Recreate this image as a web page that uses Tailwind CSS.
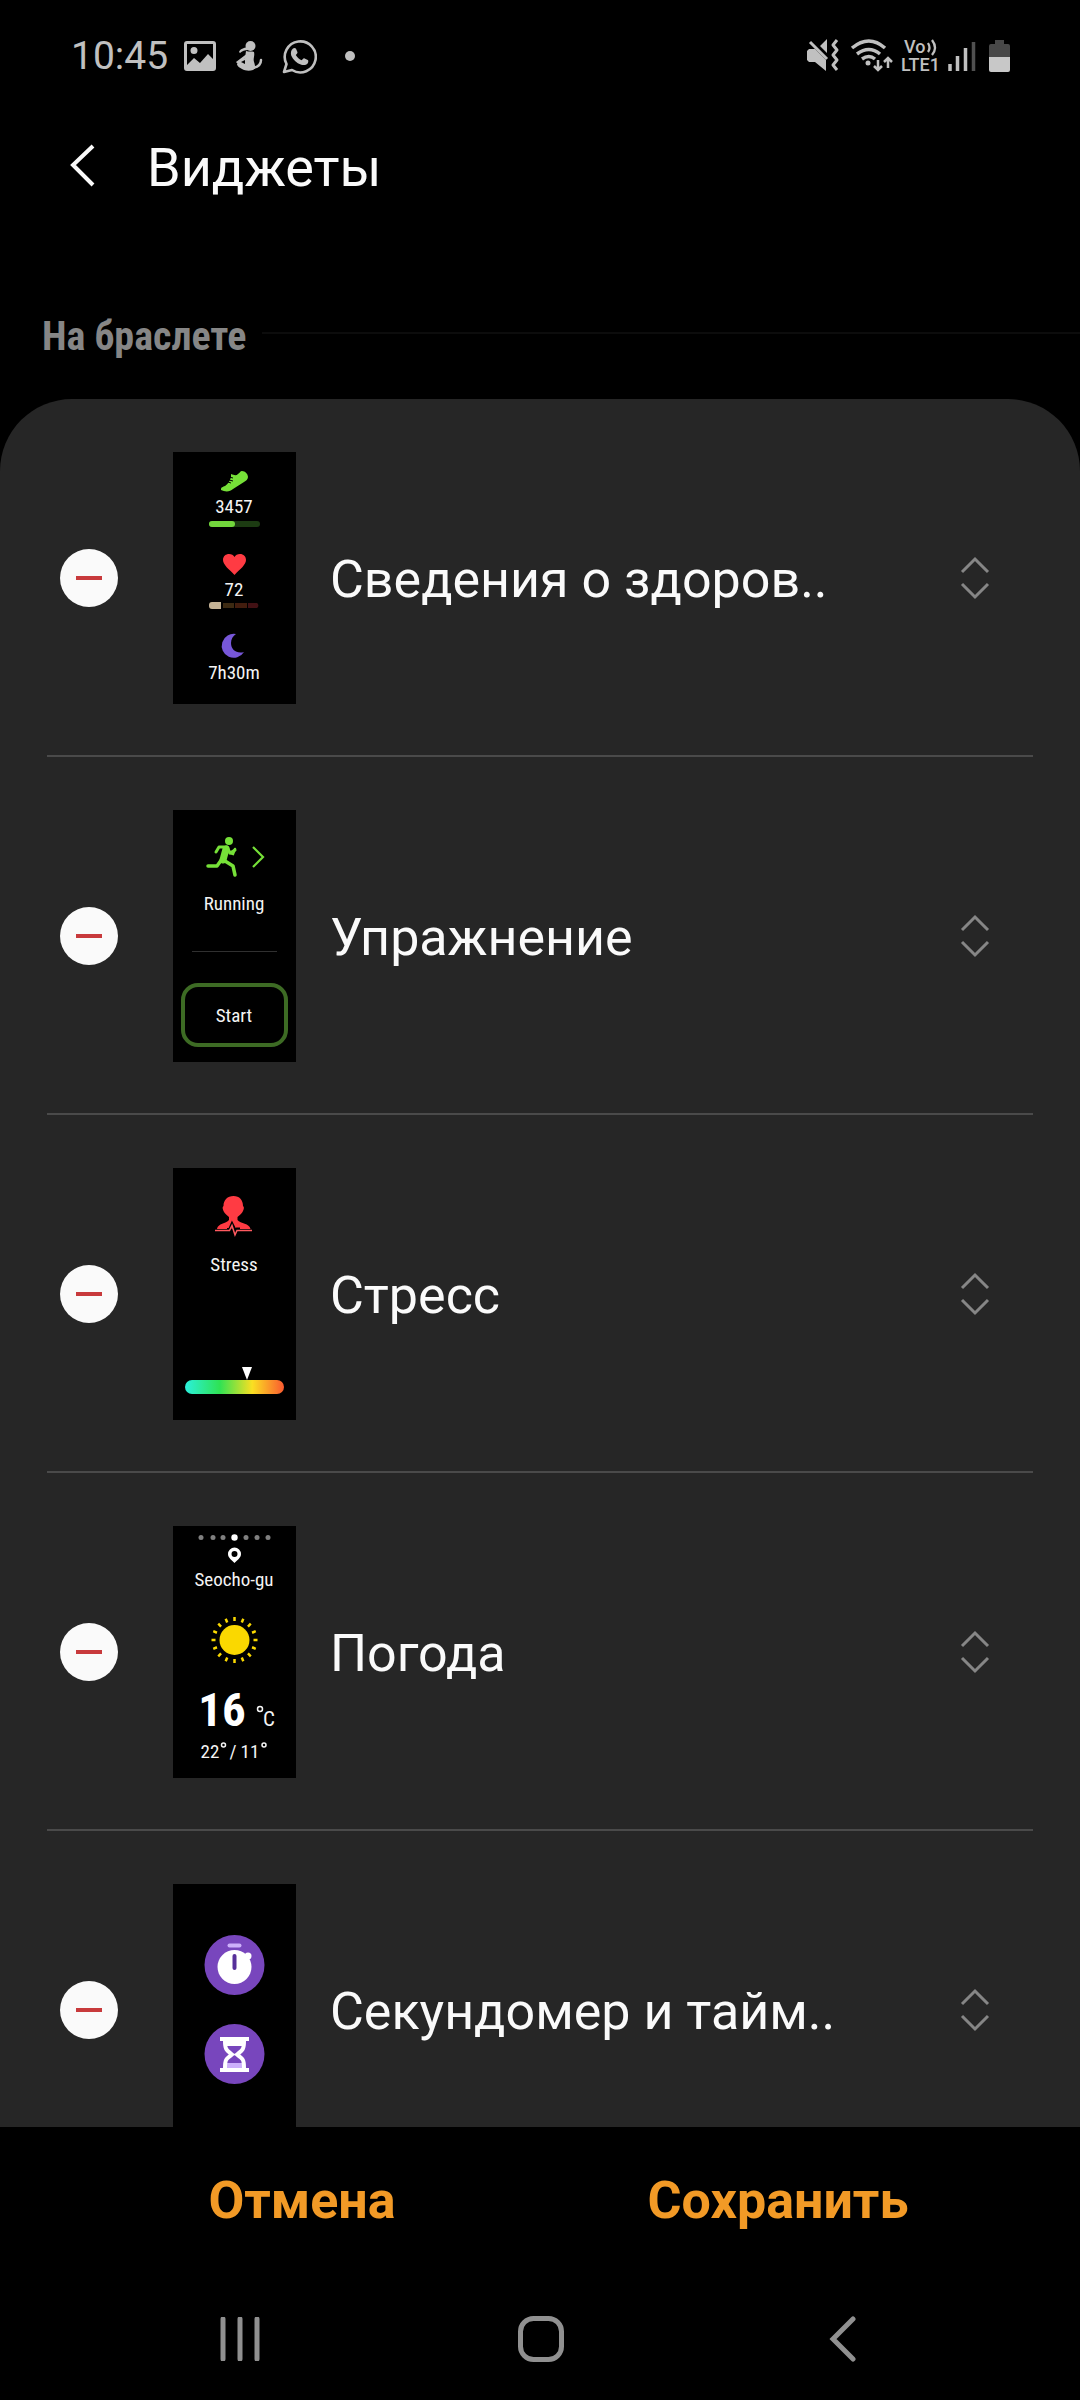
<!DOCTYPE html>
<html lang="ru">
<head>
<meta charset="utf-8">
<meta name="viewport" content="width=device-width, initial-scale=1">
<title>Виджеты</title>
<script src="https://cdn.jsdelivr.net/npm/@tailwindcss/browser@4"></script>
</head>
<body class="bg-black text-[#fafafa] font-[Roboto,sans-serif]">
<svg class="hidden" aria-hidden="true">
  <symbol id="sort" viewBox="0 0 32 46"><path d="M3 17 16 4l13 13M3 29l13 13 13-13" fill="none" stroke="#868686" stroke-width="3"/></symbol>
</svg>
<div class="flex h-screen flex-col">

  <div class="flex h-28 shrink-0 items-center justify-between pl-[71px] pr-[70px] text-[#c0c0c0]">
    <div class="flex items-center">
      <span class="w-[113px] text-[39px] leading-none">10:45</span>
      <svg class="h-[30px] w-8" viewBox="0 0 32 30"><path fill="#c0c0c0" fill-rule="evenodd" d="M3 0h26a3 3 0 0 1 3 3v24a3 3 0 0 1-3 3H3a3 3 0 0 1-3-3V3a3 3 0 0 1 3-3zm0 3v21l7-7 6 5 8-9 5 5V3zM10 6a3.500 3.500 0 1 1 0 7 3.500 3.500 0 0 1 0-7z"/></svg>
      <svg class="ml-5 h-[30px] w-[27px]" viewBox="0 0 27 30"><g fill="#c0c0c0"><circle cx="14.500" cy="5" r="5"/><path d="M10 10c3 1 6 0 8 1 1 4-1 6 0 10 1 3 2 6-1 8-3 1-8 1-11-1-2-1-5-3-5-5l2-3 6-3z"/><path d="M3 11c1-3 5-4 8-5l1 3c-3 0-6 1-8 3z"/></g><path d="m10 15-8 6 6 4M17 27c5-1 8-4 8-8" fill="none" stroke="#c0c0c0" stroke-width="2.500" stroke-linecap="round"/><path d="m5 21 4-2v4z" fill="#000"/></svg>
      <svg class="ml-[19px] h-[35px] w-[35px]" viewBox="0 0 35 35"><path d="M2 33l2.500-8A15.500 15.500 0 1 1 10 31z" fill="none" stroke="#c0c0c0" stroke-width="2.600" stroke-linejoin="round"/><path fill="#c0c0c0" d="M11 9.500c1-.8 2.500-.8 3 .3l1.400 3.200c.3.800-.1 1.500-1.600 3 1.500 2.700 3.500 4.300 6 5.300 1.500-1.800 2-2.200 2.800-1.900l3.200 1.600c.8.500.6 2.300-.2 3.400-1.500 1.800-4 2.100-6.300 1.300-5-1.700-8.300-5-10-9-.8-2.500-.5-5.500 1.700-7.200z"/></svg>
      <span class="ml-7 size-[10px] rounded-full bg-[#c0c0c0]"></span>
    </div>
    <svg class="h-9 w-[204px] overflow-visible" viewBox="806 37 204 36" fill="none" stroke="#c0c0c0">
      <g fill="#c0c0c0" stroke="none"><path d="M809 48h6l11 11v11l-11-9h-6l-2-2v-9zM820 45l7-7v14z"/></g>
      <path d="m810 41 17 17" stroke-width="3"/>
      <path d="m837 39-4 5 4 5-4 5 4 5-4 5 4 5" stroke-width="3" stroke-linejoin="round"/>
      <g stroke-width="3.500"><path d="M852 47q17-14 33 0M857 53q12-9 23 0M862 58q7-5 13 0"/></g>
      <circle cx="868" cy="62" r="2.500" fill="#c0c0c0" stroke="none"/>
      <path d="M878 59v10m-4-4 4 4 4-4M888 67V57m-4 4 4-4 4 4" stroke-width="2.500"/>
      <text x="904" y="52" font-size="18" font-weight="500" fill="#c0c0c0" stroke="none">Vo</text>
      <path d="M928 42q3 5 0 9M932 39q6 8 0 15" stroke-width="2.300"/>
      <text x="901" y="70" font-size="18" font-weight="500" fill="#c0c0c0" stroke="none">LTE1</text>
      <g stroke-width="3.500"><path d="M950 63v7M957.500 55v15M965.500 47v23"/><path d="M973.500 41v29" stroke="#505050"/></g>
      <path d="M989 56V45q0-2 2-2h4v-4h9v4h4q2 0 2 2v11z" fill="#484848" stroke="none"/>
      <path d="M989 56h21v13q0 2-2 2h-17q-2 0-2-2z" fill="#c8c8c8" stroke="none"/>
    </svg>
  </div>

  <header class="flex h-[108px] shrink-0 items-center pl-[68px]">
    <button type="button" aria-label="Назад" class="flex w-[79px] items-center">
      <svg class="h-12 w-7" viewBox="0 0 28 48"><path d="M25 4 5 23l20 20" fill="none" stroke="#fafafa" stroke-width="4"/></svg>
    </button>
    <h1 class="pt-[3px] text-[54px] leading-none">Виджеты</h1>
  </header>

  <div class="flex shrink-0 items-center gap-4 pb-[30px] pl-[42px] pt-[85px]">
    <h2 class="font-['Roboto_Condensed',Roboto,sans-serif] text-[40px] font-bold leading-[64px] text-[#868686]">На браслете</h2>
    <div class="mb-2 h-[2px] flex-1 bg-[#0c0c0c]"></div>
  </div>

  <main class="min-h-0 flex-1 overflow-hidden rounded-t-[72px] bg-[#262626]">
    <ul class="px-[47px]">
      <li class="flex h-[358px] items-center border-b-2 border-[#4a4a4a] pl-[13px] pr-[42px] pt-[2px]">
        <button type="button" aria-label="Удалить: Сведения о здоровье" class="flex size-[58px] shrink-0 items-center justify-center rounded-full bg-[#fafafa]"><span class="h-1 w-[26px] bg-[#c83a3c]"></span></button>
        <svg class="ml-[55px] h-[252px] w-[123px] shrink-0 bg-black" viewBox="0 0 123 252" font-family="'Roboto Condensed', Roboto, sans-serif" font-size="19" fill="#f4f4f4" text-anchor="middle">
          <path fill="#76e038" d="M48 37c0-2 2-2 4-3 3-2 5-5 6-9v-3c3 1 5 2 7 0 2-1 2-3 4-3 3 0 6 3 6 6 0 2-2 4-4 5L60 37c-3 3-8 3-12 1z"/><path d="m56 25 4 1m-4 2 4 1m-5 1 3 1" stroke="#000" stroke-width="1"/>
          <text x="61" y="61">3457</text>
          <rect x="36" y="69" width="51" height="6" rx="3" fill="#1c3b12"/><rect x="36" y="69" width="26" height="6" rx="3" fill="#72d63c"/>
          <path fill="#ff3b43" d="M61.500 123C56 117 50 113 50 108c0-4 3-6 6-6 2.500 0 4.500 1 5.500 3 1-2 3-3 5.500-3 3.500 0 6 2.500 6 6 0 5-6 9-11.500 15z"/>
          <text x="61" y="144">72</text>
          <path d="M39 150h9v7h-9a3 3 0 0 1-3-3v-1a3 3 0 0 1 3-3z" fill="#c4b295"/><path d="M50 151h11v5H50z" fill="#3d2a12"/><path d="M62 151h12v5H62z" fill="#431d0e"/><path d="M75 151h9a3 3 0 0 1 0 5h-9z" fill="#421114"/>
          <path fill="#7757d8" d="M63 182a12 12 0 1 0 8 18c-7 2-13-2-13-9 0-4 2-7 5-9z"/>
          <text x="61" y="227">7h30m</text>
        </svg>
        <span class="ml-[34px] flex-1 whitespace-nowrap pt-[3px] text-[52px] leading-none">Сведения о здоров..</span>
        <button type="button" aria-label="Переместить" class="shrink-0"><svg class="h-[46px] w-8"><use href="#sort"/></svg></button>
      </li>
      <li class="flex h-[358px] items-center border-b-2 border-[#4a4a4a] pl-[13px] pr-[42px] pt-[2px]">
        <button type="button" aria-label="Удалить: Упражнение" class="flex size-[58px] shrink-0 items-center justify-center rounded-full bg-[#fafafa]"><span class="h-1 w-[26px] bg-[#c83a3c]"></span></button>
        <svg class="ml-[55px] h-[252px] w-[123px] shrink-0 bg-black" viewBox="0 0 123 252" font-family="'Roboto Condensed', Roboto, sans-serif" font-size="19" fill="#f4f4f4" text-anchor="middle">
          <circle cx="56" cy="31" r="4" fill="#76e038"/>
          <g fill="none" stroke="#76e038" stroke-linecap="round" stroke-linejoin="round"><path d="m43 42 3-5h8l3 6 5-3" stroke-width="3"/><path d="m53 39-3 11" stroke-width="7"/><path d="m49 49-5 7H35M52 51l8 5 2 9" stroke-width="3.500"/></g>
          <path d="m57 43 3 1 2-5" fill="none" stroke="#76e038" stroke-width="2.500" stroke-linecap="round"/>
          <path d="m80 37 10 10-10 10" fill="none" stroke="#76e038" stroke-width="2.200"/>
          <text x="61" y="100">Running</text>
          <path d="M19 141.500h85" stroke="#303030"/>
          <rect x="10" y="175" width="103" height="60" rx="15" fill="none" stroke="#3d6b24" stroke-width="4"/>
          <text x="61" y="212">Start</text>
        </svg>
        <span class="ml-[34px] flex-1 whitespace-nowrap pt-[3px] text-[52px] leading-none">Упражнение</span>
        <button type="button" aria-label="Переместить" class="shrink-0"><svg class="h-[46px] w-8"><use href="#sort"/></svg></button>
      </li>
      <li class="flex h-[358px] items-center border-b-2 border-[#4a4a4a] pl-[13px] pr-[42px] pt-[2px]">
        <button type="button" aria-label="Удалить: Стресс" class="flex size-[58px] shrink-0 items-center justify-center rounded-full bg-[#fafafa]"><span class="h-1 w-[26px] bg-[#c83a3c]"></span></button>
        <svg class="ml-[55px] h-[252px] w-[123px] shrink-0 bg-black" viewBox="0 0 123 252" font-family="'Roboto Condensed', Roboto, sans-serif" font-size="19" fill="#f4f4f4" text-anchor="middle">
          <defs><linearGradient id="level"><stop offset="0" stop-color="#2bf0dc"/><stop offset=".35" stop-color="#2fe254"/><stop offset=".68" stop-color="#fadf22"/><stop offset="1" stop-color="#fa5a30"/></linearGradient></defs>
          <path fill="#ff3b43" d="M60.500 28c6 0 9.500 4 9.500 10 1.500 1 1 3-.5 6-1 2-3 3-5 5v3c3 4 12 3 13 9H44c1-6 9-5 12-9v-3c-2-2-4-3-5-5-1.500-3-2-5-.5-6 0-6 4-10 10-10z"/>
          <path d="M54 61.500h2.500l2.500-5.500 3.500 7 1.500-2h3" fill="none" stroke="#000" stroke-width="3"/>
          <path d="M42 62.500h14.500l2.500-5 3 9.500 2-4.500h15" fill="none" stroke="#ff5a60" stroke-width="1.500"/>
          <text x="61" y="103">Stress</text>
          <path d="M69 199h10l-5 13z" fill="#fff"/>
          <rect x="12" y="212" width="99" height="14" rx="7" fill="url(#level)"/>
        </svg>
        <span class="ml-[34px] flex-1 whitespace-nowrap pt-[3px] text-[52px] leading-none">Стресс</span>
        <button type="button" aria-label="Переместить" class="shrink-0"><svg class="h-[46px] w-8"><use href="#sort"/></svg></button>
      </li>
      <li class="flex h-[358px] items-center border-b-2 border-[#4a4a4a] pl-[13px] pr-[42px] pt-[2px]">
        <button type="button" aria-label="Удалить: Погода" class="flex size-[58px] shrink-0 items-center justify-center rounded-full bg-[#fafafa]"><span class="h-1 w-[26px] bg-[#c83a3c]"></span></button>
        <svg class="ml-[55px] h-[252px] w-[123px] shrink-0 bg-black" viewBox="0 0 123 252" font-family="'Roboto Condensed', Roboto, sans-serif" font-size="19" fill="#f4f4f4" text-anchor="middle">
          <g fill="#808080"><circle cx="28" cy="11.500" r="2.500"/><circle cx="40" cy="11.500" r="2.500"/><circle cx="50" cy="11.500" r="2.500"/><circle cx="73" cy="11.500" r="2.500"/><circle cx="84" cy="11.500" r="2.500"/><circle cx="95" cy="11.500" r="2.500"/></g><circle cx="61.500" cy="11.500" r="3.200" fill="#fff"/>
          <path fill="#fff" fill-rule="evenodd" d="M61.500 37C59 34 55 32 55 28a6.500 6.500 0 0 1 13 0c0 4-4 6-6.500 9zm0-12a3 3 0 1 0 0 6 3 3 0 0 0 0-6z"/>
          <text x="61" y="60">Seocho-gu</text>
          <circle cx="61.500" cy="114" r="15" fill="#fad800"/>
          <g stroke="#fad800" stroke-width="2.500"><path id="ray" d="M61.500 91v4M61.500 133v4"/><use href="#ray" transform="rotate(22.500 61.500 114)"/><use href="#ray" transform="rotate(45 61.500 114)"/><use href="#ray" transform="rotate(67.500 61.500 114)"/><use href="#ray" transform="rotate(90 61.500 114)"/><use href="#ray" transform="rotate(112.500 61.500 114)"/><use href="#ray" transform="rotate(135 61.500 114)"/><use href="#ray" transform="rotate(157.500 61.500 114)"/></g>
          <text x="49" y="200" font-size="47" font-weight="700" fill="#fff">16</text>
          <circle cx="87" cy="183" r="2.500" fill="none" stroke="#f4f4f4" stroke-width="1.500"/>
          <text x="96" y="200" font-size="21">C</text>
          <text x="37" y="232">22</text><circle cx="50.500" cy="219" r="2" fill="none" stroke="#f4f4f4" stroke-width="1.500"/><text x="60" y="232">/</text><text x="77" y="232">11</text><circle cx="91" cy="219" r="2" fill="none" stroke="#f4f4f4" stroke-width="1.500"/>
        </svg>
        <span class="ml-[34px] flex-1 whitespace-nowrap pt-[3px] text-[52px] leading-none">Погода</span>
        <button type="button" aria-label="Переместить" class="shrink-0"><svg class="h-[46px] w-8"><use href="#sort"/></svg></button>
      </li>
      <li class="flex h-[358px] items-center border-b-2 border-[#4a4a4a] pl-[13px] pr-[42px] pt-[2px]">
        <button type="button" aria-label="Удалить: Секундомер и таймер" class="flex size-[58px] shrink-0 items-center justify-center rounded-full bg-[#fafafa]"><span class="h-1 w-[26px] bg-[#c83a3c]"></span></button>
        <svg class="ml-[55px] h-[252px] w-[123px] shrink-0 bg-black" viewBox="0 0 123 252">
          <circle cx="61.500" cy="81" r="30" fill="#7846bd"/><circle cx="61.500" cy="170" r="30" fill="#7846bd"/>
          <rect x="54.500" y="59.500" width="14" height="4" rx="2" fill="#cdb0fb"/><circle cx="61.500" cy="83" r="17" fill="#fff"/><circle cx="75" cy="72" r="3.500" fill="#fff"/><path d="M61.500 72v12" stroke="#57309a" stroke-width="4" stroke-linecap="round"/>
          <path d="M53 179h17v6H53z" fill="#cdb0fb"/>
          <path d="M47 153h29v4H47zM47 184h29v4H47zM52 157h19v5H52z" fill="#fff"/>
          <path d="M52 157c0 8 1 9 7 13.500-6 4.500-7 5-7 13.500M71 157c0 8-1 9-7 13.500 6 4.500 7 5 7 13.500" fill="none" stroke="#fff" stroke-width="4"/>
        </svg>
        <span class="ml-[34px] flex-1 whitespace-nowrap pt-[3px] text-[52px] leading-none">Секундомер и тайм..</span>
        <button type="button" aria-label="Переместить" class="shrink-0"><svg class="h-[46px] w-8"><use href="#sort"/></svg></button>
      </li>
    </ul>
  </main>

  <footer class="grid h-[145px] shrink-0 grid-cols-2 px-16 pt-[2px] text-[52px] font-bold leading-none text-[#f29a26]">
    <button type="button">Отмена</button>
    <button type="button">Сохранить</button>
  </footer>

  <nav class="grid h-32 shrink-0 grid-cols-3 pl-[89px] pr-[87px] pt-[5px]" aria-label="Навигация">
    <button type="button" aria-label="Недавние" class="flex items-center justify-center"><svg class="h-11 w-11" viewBox="0 0 44 44"><path d="M5 2v40M22 2v40M39 2v40" stroke="#909090" stroke-width="5" stroke-linecap="round"/></svg></button>
    <button type="button" aria-label="Главный экран" class="flex items-center justify-center"><svg class="h-12 w-12" viewBox="0 0 48 48"><rect x="3.500" y="3.500" width="41" height="41" rx="13" fill="none" stroke="#909090" stroke-width="5"/></svg></button>
    <button type="button" aria-label="Назад" class="flex items-center justify-center"><svg class="h-12 w-7" viewBox="0 0 28 48"><path d="M25 4 5 24l20 20" fill="none" stroke="#909090" stroke-width="5" stroke-linecap="round"/></svg></button>
  </nav>
</div>
</body>
</html>
